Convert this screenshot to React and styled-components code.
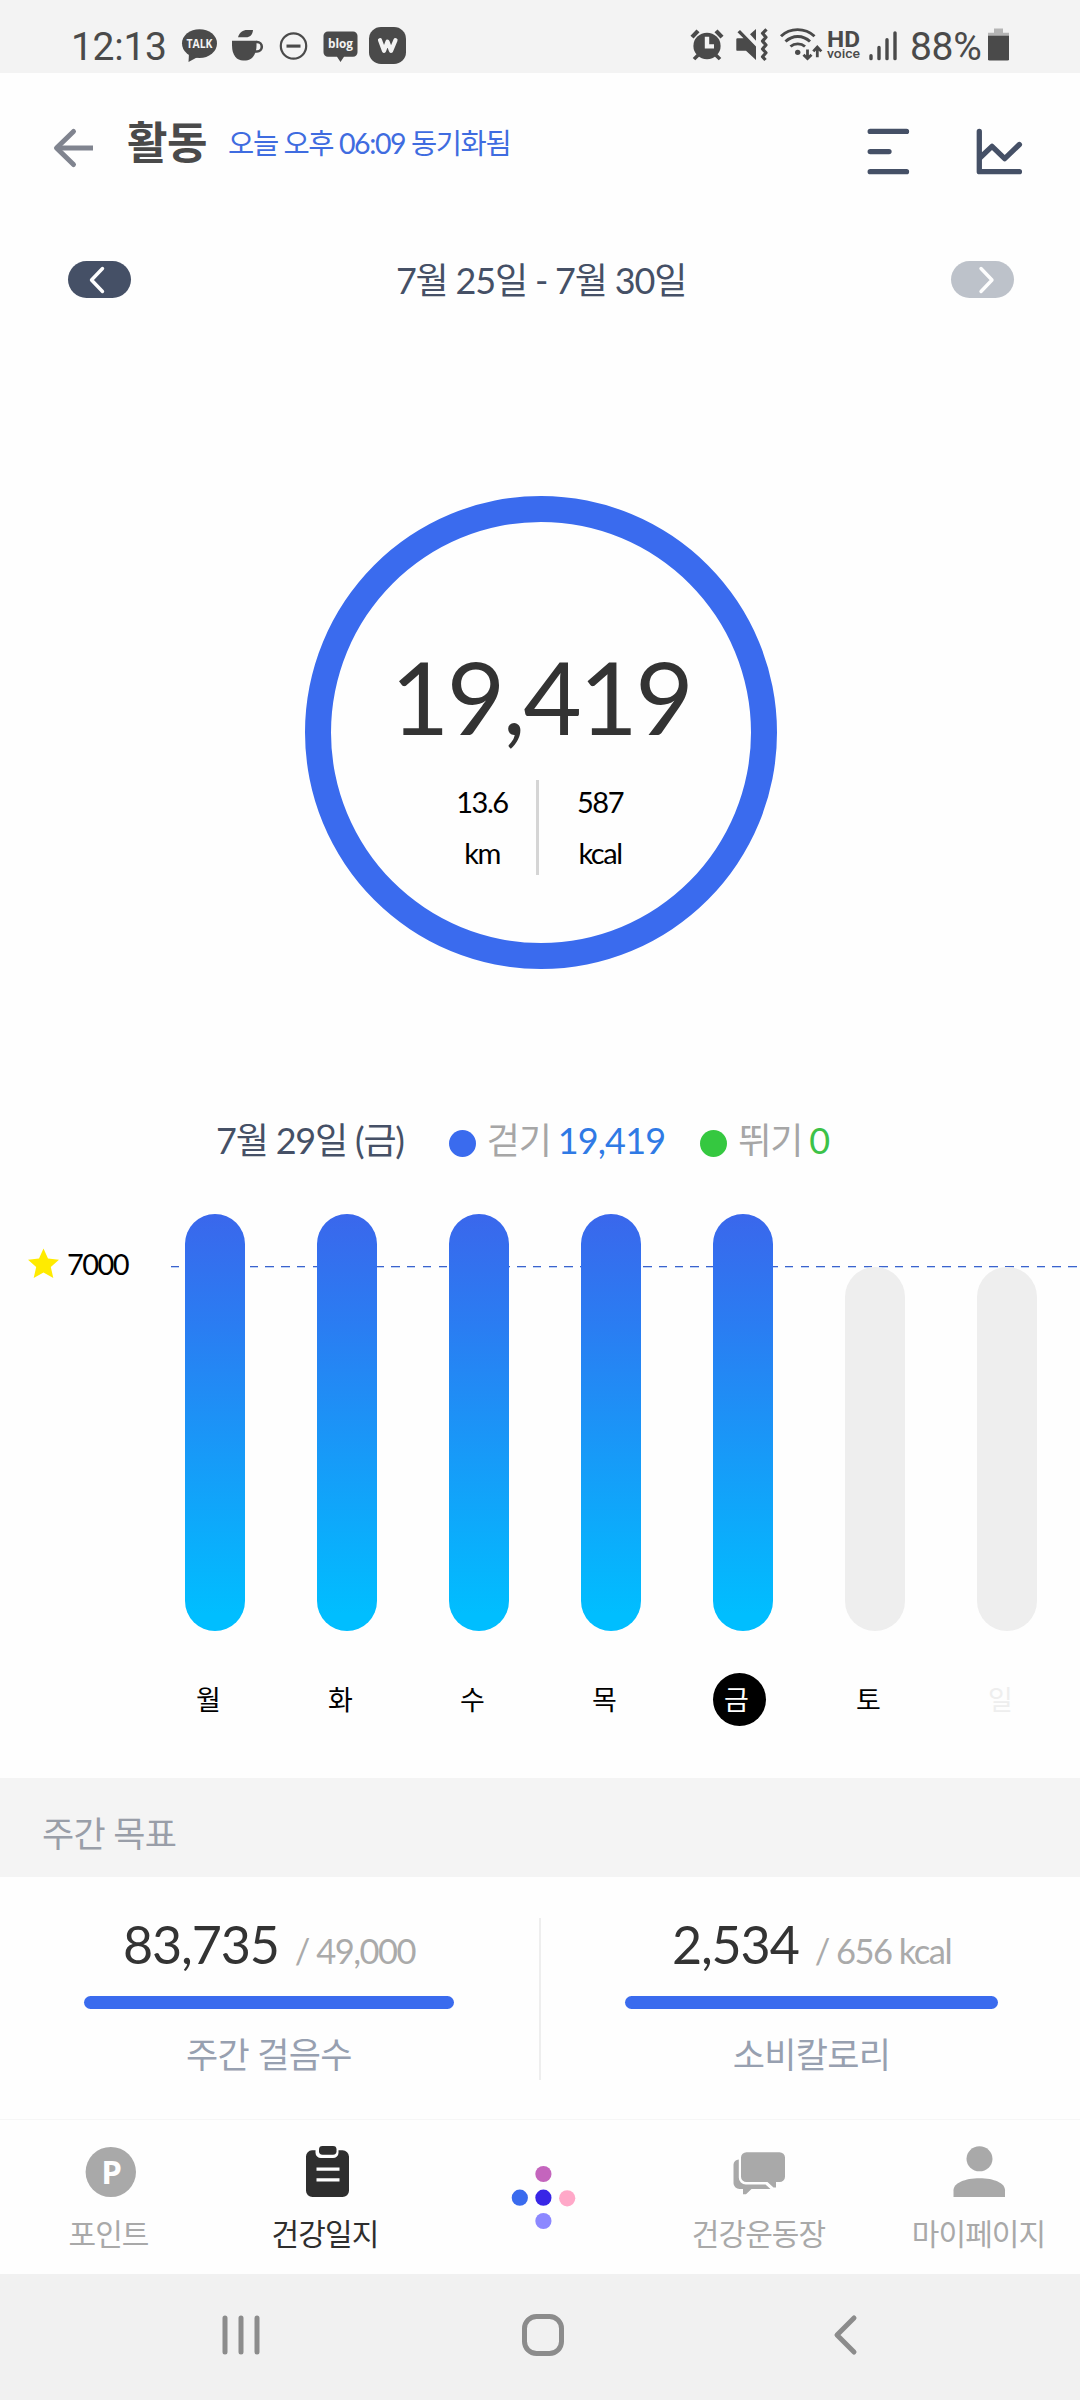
import React from 'react';
import styled, { createGlobalStyle } from 'styled-components';

const GlobalStyle = createGlobalStyle`
  * {
    box-sizing: border-box;
  }

  body {
    margin: 0;
    background: #fefefe;
    font-family: Lato, 'Noto Sans CJK KR', sans-serif;
  }

  svg {
    display: block;
    flex: none;
    overflow: visible;
  }
`;

const Screen = styled.div`
  display: flex;
  flex-direction: column;
  width: 1080px;
  height: 2400px;
  overflow: hidden;
  background: #fefefe;
`;

// Status bar
const StatusBar = styled.div`
  display: flex;
  justify-content: space-between;
  height: 73px;
  padding: 27px 71px 0 71px;
  background: #f3f3f3;
  color: #4a4a4a;
`;

const StatusGroup = styled.div`
  display: flex;
  align-items: center;
  height: 37px;
`;

const StatusText = styled.span`
  width: ${(props) => props.$width}px;
  margin-top: 2px;
  margin-left: ${(props) => props.$ml || 0}px;
  font-family: Roboto, sans-serif;
  font-size: 39px;
  line-height: 46px;
  letter-spacing: -0.3px;
  white-space: nowrap;
`;

const StatusIcon = styled.svg`
  height: 37px;
  margin-left: ${(props) => props.$ml || 0}px;
  fill: #4a4a4a;
`;

// Header
const Header = styled.header`
  display: flex;
  align-items: flex-start;
  height: 145px;
  padding: 0 57px 0 53px;
`;

const BackButton = styled.div`
  padding-top: 55px;
`;

const Title = styled.h1`
  margin: 39px 0 0 33px;
  font-size: 44px;
  font-weight: 700;
  line-height: 60px;
  letter-spacing: -0.01em;
  color: #4a4a4a;
`;

const SyncText = styled.span`
  margin: 50px 0 0 21px;
  font-size: 28.5px;
  line-height: 41px;
  letter-spacing: -0.05em;
  color: #3f6ce0;
  white-space: nowrap;
`;

const HeaderActions = styled.div`
  display: flex;
  gap: 66px;
  margin-left: auto;
  padding-top: 55px;
`;

// Week switcher
const WeekNav = styled.div`
  display: flex;
  align-items: center;
  justify-content: space-between;
  height: 123px;
  padding: 0 66px 0 68px;
`;

const WeekButton = styled.div`
  display: flex;
  align-items: center;
  justify-content: center;
  width: 63px;
  height: 37px;
  border-radius: 19px;
  background: ${(props) => (props.$disabled ? '#bdc2ca' : '#455066')};
`;

const WeekText = styled.div`
  font-size: 36px;
  line-height: 48px;
  letter-spacing: -0.033em;
  color: #455066;
`;

// Step ring
const Ring = styled.section`
  display: flex;
  flex-direction: column;
  align-items: center;
  width: 472px;
  height: 473px;
  margin: 155px auto 0 305px;
  padding-top: 114px;
  border: 26px solid #3a6bee;
  border-radius: 50%;
`;

const StepCount = styled.div`
  padding-left: 0;
  font-size: 101px;
  line-height: 120px;
  letter-spacing: -0.025em;
  color: #333;
`;

const RingStats = styled.div`
  display: flex;
  margin-top: 20px;
  margin-right: 7px;
`;

const RingDivider = styled.div`
  width: 3px;
  height: 95px;
  margin-top: 4px;
  background: #d5d5d5;
`;

const RingStat = styled.div`
  display: flex;
  flex-direction: column;
  align-items: center;
  width: 122px;
  padding-left: ${(props) => props.$pl || 0}px;
  font-size: 29px;
  line-height: 51px;
  letter-spacing: -0.05em;
  color: #000;
`;

// Legend above the chart
const Legend = styled.div`
  display: flex;
  align-items: center;
  height: 50px;
  margin-top: 146px;
  padding-left: 216px;
  font-size: 36px;
  line-height: 50px;
  letter-spacing: -0.033em;
  white-space: nowrap;
  color: #455066;
`;

const LegendItem = styled.div`
  display: flex;
  align-items: center;
  margin-left: ${(props) => props.$ml}px;
  color: #a6a6a6;

  &::before {
    content: '';
    width: 27px;
    height: 27px;
    margin: 6px 11px 0 0;
    border-radius: 50%;
    background: ${(props) => props.$dot};
  }
`;

const LegendValue = styled.span`
  margin-left: 7px;
  letter-spacing: -0.023em;
  color: ${(props) => props.$color};
`;

// Weekly chart
const Chart = styled.section`
  display: flex;
  height: 564px;
  margin-top: 49px;
`;

const GoalLabel = styled.div`
  display: flex;
  align-items: center;
  gap: 8px;
  width: 171px;
  height: 40px;
  margin-top: 29px;
  padding-left: 28px;
  font-size: 29px;
  letter-spacing: -0.053em;
  color: #000;
`;

const Plot = styled.div`
  position: relative;
  display: flex;
  gap: 72px;
  flex: 1;
  padding-left: 14px;
`;

// Dashed goal marker that runs behind the bars
const GoalLine = styled.div`
  position: absolute;
  top: 52px;
  left: 0;
  right: 0;
  height: 2px;
  background:
    repeating-linear-gradient(90deg, #3c62cc 0 8.4px, transparent 8.4px 15.74px) 0 0 / 100% 1px no-repeat,
    repeating-linear-gradient(90deg, #bcd2f6 0 8.4px, transparent 8.4px 15.74px) 0 1px / 100% 1px no-repeat;
`;

const Day = styled.div`
  position: relative;
  display: flex;
  flex-direction: column;
  flex: none;
  width: 60px;
`;

const Track = styled.div`
  display: flex;
  align-items: flex-end;
  height: 417px;
`;

const Bar = styled.div`
  width: 60px;
  border-radius: 30px;
  background: ${(props) => (props.$filled ? 'linear-gradient(#3a67ec 0%, #2a7df2 27%, #00beff 96%)' : '#eee')};
`;

const DayName = styled.div`
  width: 53px;
  height: 53px;
  margin-top: 42px;
  padding-left: 11px;
  border-radius: 50%;
  background: ${(props) => (props.$selected ? '#000' : 'transparent')};
  font-size: 27px;
  line-height: 53px;
  color: ${(props) => props.$color || '#000'};
`;

// Weekly goals
const SectionTitle = styled.h2`
  height: 99px;
  margin: 0;
  padding: 30px 42px 0;
  background: #f4f4f4;
  font-size: 35px;
  font-weight: 400;
  line-height: 50px;
  letter-spacing: -0.02em;
  color: #999ea8;
`;

const Goals = styled.section`
  display: flex;
  height: 242px;
  padding-top: 41px;
`;

const Goal = styled.div`
  display: flex;
  flex-direction: column;
  align-items: center;
  width: ${(props) => (props.$last ? 539 : 541)}px;
  height: 162px;
  padding: ${(props) => (props.$last ? '0 82px 0 84px' : '0 85px 0 84px')};
  border-right: ${(props) => (props.$last ? 'none' : '2px solid #eee')};
`;

const GoalNumbers = styled.div`
  height: 78px;
  line-height: 52px;
  white-space: nowrap;
`;

const GoalCurrent = styled.span`
  font-size: 52px;
  letter-spacing: -0.022em;
  color: #333;
`;

const GoalTarget = styled.span`
  margin-left: 16px;
  font-size: 34.5px;
  letter-spacing: -0.044em;
  color: #aaa;
`;

const Progress = styled.div`
  width: 100%;
  height: 13px;
  border-radius: 7px;
  background: #3a6bee;
`;

const GoalName = styled.div`
  margin-top: 20px;
  font-size: 35px;
  line-height: 50px;
  letter-spacing: -0.02em;
  color: #97a0b0;
`;

// Bottom tabs
const TabBar = styled.nav`
  display: flex;
  height: 155px;
  border-top: 1px solid #f6f6f6;
`;

const Tab = styled.div`
  display: flex;
  flex-direction: column;
  align-items: center;
  flex: none;
  width: ${(props) => props.$width}px;
  padding-top: 26px;
  color: ${(props) => (props.$active ? '#2e2e2e' : '#a9a9a9')};
  fill: ${(props) => (props.$active ? '#2e2e2e' : '#a9a9a9')};
`;

const TabIcon = styled.svg`
  width: 54px;
  height: 52px;
  margin-bottom: 15px;
`;

const TabLabel = styled.span`
  padding-right: 2px;
  font-size: 30px;
  line-height: 40px;
  letter-spacing: -0.03em;
  white-space: nowrap;
`;

// System navigation
const SystemNav = styled.div`
  display: flex;
  align-items: center;
  height: 126px;
  padding: 0 0 4px 222px;
  background: #f1f1f1;
`;

const HomeButton = styled.svg`
  margin: 0 270px 0 261px;
`;

const days = [
  { name: '월', value: 417, filled: true },
  { name: '화', value: 417, filled: true },
  { name: '수', value: 417, filled: true },
  { name: '목', value: 417, filled: true },
  { name: '금', value: 417, filled: true, selected: true, color: '#fff' },
  { name: '토', value: 364 },
  { name: '일', value: 364, color: '#eee' },
];

const LeftStatus = () => (
  <StatusGroup>
    <StatusText $width={111}>12:13</StatusText>
    <StatusIcon width="35" viewBox="0 0 35 38" preserveAspectRatio="none">
      <ellipse cx="17.5" cy="17" rx="17.5" ry="14.8" />
      <path d="M7 27 L6.500 36 L17 30 Z" />
      <text x="17.5" y="21.500" fontFamily="Open Sans" fontWeight="700" fontSize="12.5" textAnchor="middle" textLength="26" lengthAdjust="spacingAndGlyphs" fill="#f3f3f3">TALK</text>
    </StatusIcon>
    <StatusIcon $ml={15} width="33" viewBox="0 0 33 38" preserveAspectRatio="none">
      <path d="M6 10.500 C7.500 5 11 3 15 3 H21 C20.500 8 18 10.500 14 10.500 Z" />
      <path d="M0 14 H24.500 V19 C24.500 29 19 34.500 14 34.500 H11 C5 34.500 0 29 0 19 Z" />
      <path d="M24 15.500 h1 a4.800 4.800 0 0 1 0 9.600 h-2" fill="none" stroke="#4a4a4a" strokeWidth="2.600" />
    </StatusIcon>
    <StatusIcon $ml={14} width="29" viewBox="0 0 29 38" preserveAspectRatio="none">
      <ellipse cx="14.5" cy="19.500" rx="12.700" ry="13" fill="none" stroke="#4a4a4a" strokeWidth="2.200" />
      <rect x="7.500" y="18" width="14" height="3.200" />
    </StatusIcon>
    <StatusIcon $ml={15} width="35" viewBox="0 0 35 38" preserveAspectRatio="none">
      <path d="M5 4.500 H30 a4.500 4.500 0 0 1 4.500 4.500 V26 a4.500 4.500 0 0 1 -4.500 4.500 H21 L17.500 36 L14 30.500 H5 a4.500 4.500 0 0 1 -4.500 -4.500 V9 a4.500 4.500 0 0 1 4.500 -4.500 Z" />
      <text x="17.5" y="21.500" fontFamily="Open Sans" fontWeight="700" fontSize="12" textAnchor="middle" textLength="25" lengthAdjust="spacingAndGlyphs" fill="#f3f3f3">blog</text>
    </StatusIcon>
    <StatusIcon $ml={11} width="37" viewBox="0 0 37 38" preserveAspectRatio="none">
      <rect width="37" height="38" rx="12" />
      <path d="M11 13.500 L15 24.500 L18.500 15 L22 24.500 L26.500 13.500" fill="none" stroke="#f3f3f3" strokeWidth="4.200" strokeLinecap="round" strokeLinejoin="round" />
    </StatusIcon>
  </StatusGroup>
);

const RightStatus = () => (
  <StatusGroup>
    <StatusIcon width="34" viewBox="0 0 34 38" preserveAspectRatio="none">
      <circle cx="17" cy="19.500" r="13.600" />
      <path d="M2 10.500 L8 4 M26 4 L32 10.500" stroke="#4a4a4a" strokeWidth="4.200" />
      <path d="M8 29 L4 33 M26 29 L30 33" stroke="#4a4a4a" strokeWidth="3.600" />
      <path d="M14.800 10 h4.400 v7.600 h4.800 v4.400 h-9.200 Z" fill="#f3f3f3" />
    </StatusIcon>
    <StatusIcon $ml={12} width="32" viewBox="0 0 32 38" preserveAspectRatio="none">
      <path d="M1.500 11.500 H7.500 L1.500 5.500 L4 3 L20 20 V34 L10 24.500 H1.500 a1.200 1.200 0 0 1 -1.200 -1.200 V12.700 a1.200 1.200 0 0 1 1.200 -1.200 Z" />
      <path d="M14 7.500 L20 2 V14 Z" />
      <path d="M30.500 2.500 L26.500 6.500 L30 10.500 L26.500 14.500 L30 18.500 L26.500 22.500 L30 26.500 L26.500 30.500 L29.500 34" fill="none" stroke="#4a4a4a" strokeWidth="3.200" strokeLinejoin="round" />
    </StatusIcon>
    <StatusIcon $ml={12} width="42" viewBox="0 0 42 38" preserveAspectRatio="none">
      <path d="M1 9.500 C10 0.500 25 0.500 34.500 9.500 M5.500 15 C12.500 8 23 8 30 15 M10.500 20 C14.500 16.500 21 16.500 25 20" fill="none" stroke="#4a4a4a" strokeWidth="2.900" />
      <circle cx="17.700" cy="26" r="2.700" />
      <path d="M27.500 23 V32 M23.500 28.500 L27.500 32.500 L31.500 28.500 M37.300 31 V21 M33.300 25 L37.300 20.500 L41.300 25" fill="none" stroke="#4a4a4a" strokeWidth="2.800" />
    </StatusIcon>
    <StatusIcon $ml={5} width="34" viewBox="0 0 34 38" preserveAspectRatio="none">
      <text x="0" y="20.500" fontFamily="Roboto" fontWeight="700" fontSize="22" textLength="33" lengthAdjust="spacingAndGlyphs">HD</text>
      <text x="0" y="31.600" fontFamily="Roboto" fontWeight="500" fontSize="13.500" textLength="33" lengthAdjust="spacingAndGlyphs">voice</text>
    </StatusIcon>
    <StatusIcon $ml={8} width="28" viewBox="0 0 28 38" preserveAspectRatio="none">
      <path d="M2 29.500 V32.500 M10 21 V32.500 M18 13 V32.500 M26 6 V32.500" stroke="#4a4a4a" strokeWidth="3.400" strokeLinecap="round" />
    </StatusIcon>
    <StatusText $ml={13} $width={78}>88%</StatusText>
    <StatusIcon width="21" viewBox="0 0 21 38" preserveAspectRatio="none">
      <path d="M6 1.500 h9 v4.500 h6 v4 H0 V6 h6 Z" fill="#b5b5b5" />
      <path d="M0 9 h21 v24 a1.500 1.500 0 0 1 -1.500 1.500 H1.500 a1.500 1.500 0 0 1 -1.500 -1.500 Z" />
    </StatusIcon>
  </StatusGroup>
);

const App = () => {
  return (
    <Screen>
      <GlobalStyle />
      <StatusBar>
        <LeftStatus />
        <RightStatus />
      </StatusBar>

      <Header>
        <BackButton>
          <svg width="41" height="40" viewBox="0 0 41 40" fill="none" stroke="#80848f" strokeWidth="5">
            <path d="M40 20 H4" />
            <path d="M20.500 3.500 L3.500 20 L20.500 36.500" strokeLinecap="round" strokeLinejoin="round" />
          </svg>
        </BackButton>
        <Title>활동</Title>
        <SyncText>오늘 오후 06:09 동기화됨</SyncText>
        <HeaderActions>
          <svg width="43" height="47" viewBox="0 0 43 47" stroke="#455066" strokeWidth="5.300" strokeLinecap="round">
            <path d="M3.200 3.400 H39.500 M3.200 23.600 H22 M3.200 43.700 H39.500" />
          </svg>
          <svg width="47" height="47" viewBox="0 0 47 47" fill="none" stroke="#455066" strokeWidth="5.300" strokeLinecap="round" strokeLinejoin="round">
            <path d="M3.300 3.400 V43.700 H43.400 M4.300 29.500 L16 18.300 L28.700 30.700 L43.400 16.500" />
          </svg>
        </HeaderActions>
      </Header>

      <WeekNav>
        <WeekButton>
          <svg width="20" height="30" viewBox="0 0 20 30" fill="none" stroke="#fefefe" strokeWidth="3.400" strokeLinecap="round" strokeLinejoin="round">
            <path d="M12.500 3.500 L1.500 15 L12.500 26.500" />
          </svg>
        </WeekButton>
        <WeekText>7월 25일 - 7월 30일</WeekText>
        <WeekButton $disabled>
          <svg width="20" height="30" viewBox="0 0 20 30" fill="none" stroke="#fefefe" strokeWidth="3.400" strokeLinecap="round" strokeLinejoin="round">
            <path d="M8 3.500 L19 15 L8 26.500" />
          </svg>
        </WeekButton>
      </WeekNav>

      <Ring>
        <StepCount>19,419</StepCount>
        <RingStats>
          <RingStat $pl={14}>
            <span>13.6</span>
            <span>km</span>
          </RingStat>
          <RingDivider />
          <RingStat>
            <span>587</span>
            <span>kcal</span>
          </RingStat>
        </RingStats>
      </Ring>

      <Legend>
        7월 29일 (금)
        <LegendItem $ml={45} $dot="#3a6bee">
          걷기<LegendValue $color="#2f7ae5">19,419</LegendValue>
        </LegendItem>
        <LegendItem $ml={35} $dot="#35c840">
          뛰기<LegendValue $color="#3cc248">0</LegendValue>
        </LegendItem>
      </Legend>

      <Chart>
        <GoalLabel>
          <svg width="31" height="31" viewBox="0 0 31 31" fill="#ffeb00">
            <path d="M15.500 0.500 L20 10.500 L31 11.700 L22.800 19 L25.300 30 L15.500 24.600 L5.700 30 L8.200 19 L0 11.700 L11 10.500 Z" />
          </svg>
          7000
        </GoalLabel>
        <Plot>
          <GoalLine />
          {days.map((day) => (
            <Day key={day.name}>
              <Track>
                <Bar $filled={day.filled} style={{ height: day.value }} />
              </Track>
              <DayName $selected={day.selected} $color={day.color}>
                {day.name}
              </DayName>
            </Day>
          ))}
        </Plot>
      </Chart>

      <SectionTitle>주간 목표</SectionTitle>
      <Goals>
        <Goal>
          <GoalNumbers>
            <GoalCurrent>83,735</GoalCurrent>
            <GoalTarget>/ 49,000</GoalTarget>
          </GoalNumbers>
          <Progress />
          <GoalName>주간 걸음수</GoalName>
        </Goal>
        <Goal $last>
          <GoalNumbers>
            <GoalCurrent>2,534</GoalCurrent>
            <GoalTarget>/ 656 kcal</GoalTarget>
          </GoalNumbers>
          <Progress />
          <GoalName>소비칼로리</GoalName>
        </Goal>
      </Goals>

      <TabBar>
        <Tab $width={219}>
          <TabIcon viewBox="0 0 54 54" preserveAspectRatio="none">
            <ellipse cx="27.800" cy="27" rx="25.200" ry="26" />
            <text x="28.500" y="39" fontFamily="Open Sans" fontWeight="700" fontSize="33" textAnchor="middle" fill="#fefefe">P</text>
          </TabIcon>
          <TabLabel>포인트</TabLabel>
        </Tab>
        <Tab $width={214} $active>
          <TabIcon viewBox="0 0 54 54" preserveAspectRatio="none">
            <path d="M13 4.500 H16.500 V7 a5.500 5.500 0 0 0 5.500 5.500 H34 a5.500 5.500 0 0 0 5.500 -5.500 V4.500 H43.500 a6.500 6.500 0 0 1 6.500 6.500 V46.500 a6.500 6.500 0 0 1 -6.500 6.500 H13.500 a6.500 6.500 0 0 1 -6.500 -6.500 V11 a6.500 6.500 0 0 1 6 -6.500 Z" />
            <rect x="20" y="0" width="17.500" height="9" rx="3.500" />
            <path d="M17.500 24 H40.500 M17.500 35.200 H40.500" stroke="#fefefe" strokeWidth="3.200" />
          </TabIcon>
          <TabLabel>건강일지</TabLabel>
        </Tab>
        <Tab $width={220}>
          <svg width="66" height="84" viewBox="0 0 66 84">
            <circle cx="33.400" cy="28" r="8.100" fill="#c465bd" />
            <circle cx="9.800" cy="51.700" r="8.100" fill="#3a6bee" />
            <circle cx="33.400" cy="51.700" r="8.100" fill="#3826e6" />
            <circle cx="57.200" cy="52.300" r="8.100" fill="#ffa8c8" />
            <circle cx="33.400" cy="75" r="8.100" fill="#8c88ff" />
          </svg>
        </Tab>
        <Tab $width={213}>
          <TabIcon viewBox="0 0 54 54" preserveAspectRatio="none">
            <path d="M13.500 6.500 H46.500 a5.500 5.500 0 0 1 5.500 5.500 V32 a5.500 5.500 0 0 1 -5.500 5.500 H43 V43 H40.500 L34.500 37.500 H13.500 a5.500 5.500 0 0 1 -5.500 -5.500 V12 a5.500 5.500 0 0 1 5.500 -5.500 Z" />
            <path d="M5.800 14 V33 a7 7 0 0 0 7 7 H32.500 L37.500 44.700 H18.500 L13 50 H10 V44.700 H6.500 a6 6 0 0 1 -6 -6 V19.500 a5.500 5.500 0 0 1 5.300 -5.500 Z" />
          </TabIcon>
          <TabLabel>건강운동장</TabLabel>
        </Tab>
        <Tab $width={227}>
          <TabIcon viewBox="0 0 54 54" preserveAspectRatio="none">
            <circle cx="26.500" cy="13.300" r="13" />
            <path d="M0.500 53 V46 C0.500 38.500 12 33.500 26.500 33.500 C41 33.500 52 38.500 52 46 V53 Z" />
          </TabIcon>
          <TabLabel>마이페이지</TabLabel>
        </Tab>
      </TabBar>

      <SystemNav>
        <svg width="39" height="40" viewBox="0 0 39 40" stroke="#8c8c8c" strokeWidth="5" strokeLinecap="round">
          <path d="M3 3 V37 M19 3 V37 M35 3 V37" />
        </svg>
        <HomeButton width="42" height="42" viewBox="0 0 42 42" fill="none" stroke="#8c8c8c" strokeWidth="5">
          <rect x="2.500" y="2.500" width="37" height="37" rx="12" />
        </HomeButton>
        <svg width="25" height="40" viewBox="0 0 25 40" fill="none" stroke="#8c8c8c" strokeWidth="5" strokeLinecap="round" strokeLinejoin="round">
          <path d="M20 3 L3 20 L20 37" />
        </svg>
      </SystemNav>
    </Screen>
  );
};

export default App;
